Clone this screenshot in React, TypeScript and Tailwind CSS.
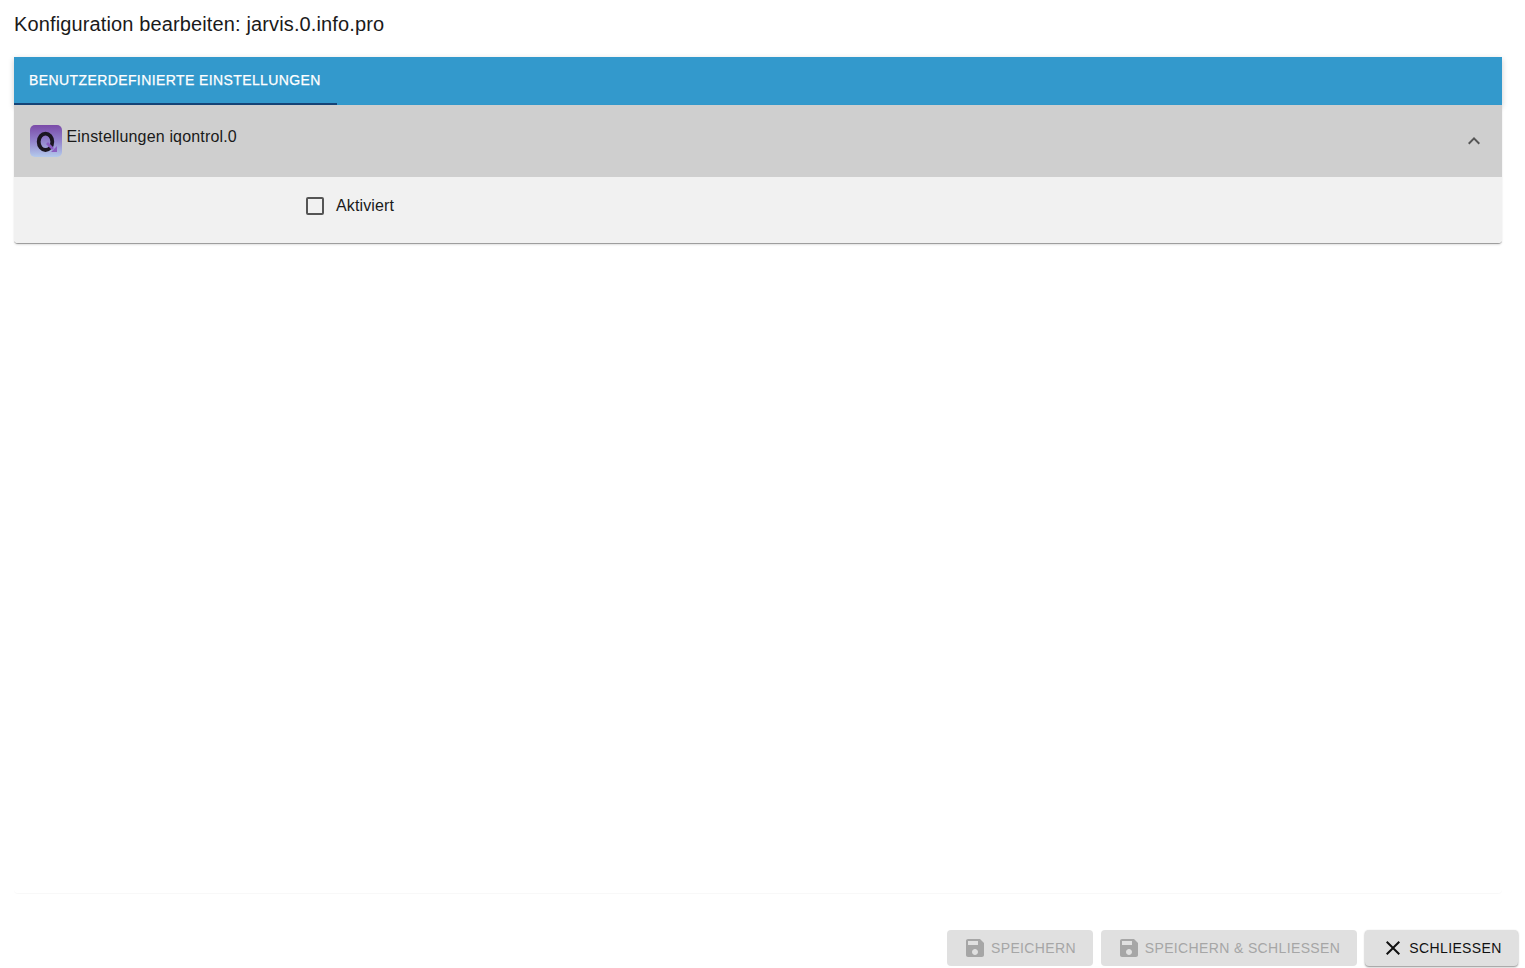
import React from "react";

function SaveIcon() {
  return (
    <svg viewBox="0 0 24 24" className="w-[24px] h-[24px] shrink-0" fill="currentColor">
      <path d="M17 3H5c-1.11 0-2 .9-2 2v14c0 1.1.89 2 2 2h14c1.1 0 2-.9 2-2V7l-4-4zm-5 16c-1.66 0-3-1.34-3-3s1.34-3 3-3 3 1.34 3 3-1.34 3-3 3zm3-10H5V5h10v4z" />
    </svg>
  );
}

function DisabledButton({ label, width }: { label: string; width: string }) {
  return (
    <div className={`${width} h-[36px] rounded bg-[#e0e0e0] text-[#a6a6a6] flex items-center justify-center gap-[4px] pr-[1px] text-[14px] tracking-[0.36px]`}>
      <SaveIcon />
      <span>{label}</span>
    </div>
  );
}

function LogoIcon() {
  return (
    <svg viewBox="0 0 32 32" className="w-[32px] h-[32px] shrink-0">
      <defs>
        <linearGradient id="lg" x1="0" y1="0" x2="0" y2="1">
          <stop offset="0" stopColor="#7a4aa8" />
          <stop offset="0.45" stopColor="#8f7cc8" />
          <stop offset="1" stopColor="#b4caec" />
        </linearGradient>
      </defs>
      <rect width="32" height="32" rx="5" fill="url(#lg)" />
      <ellipse cx="15.5" cy="16.8" rx="6.8" ry="8.2" fill="none" stroke="#1b1620" strokeWidth="3.8" />
      <path d="M17 18l6 6" stroke="#8a5cc0" strokeWidth="2.8" fill="none" />
      <path d="M21 27h6v-6z" fill="#8a5cc0" />
    </svg>
  );
}

export default function App() {
  return (
    <div className="h-[968px] w-[1525px] bg-white flex flex-col font-['Liberation_Sans',Arial,sans-serif] text-[#1a1a1a] overflow-hidden">
      <div className="h-[57px] pl-[14px] pt-[11px] text-[20px] leading-[26px] tracking-[0.13px] shrink-0">
        Konfiguration bearbeiten: jarvis.0.info.pro
      </div>
      <div className="mx-[14px] w-[1488px] h-[836px] shrink-0 rounded-[4px] shadow-[0_1px_1px_rgba(0,0,0,0.03)]">
        <div className="h-[48px] bg-[#3399cc] flex shadow-[0_2px_6px_rgba(0,0,0,0.2)]">
          <div className="w-[323px] h-[48px] border-b-2 border-[#164477] pl-[15px] pt-[14px] text-[14px] leading-[18px] text-white tracking-[0.4px] [-webkit-text-stroke:0.25px_white]">
            BENUTZERDEFINIERTE EINSTELLUNGEN
          </div>
        </div>
        <div className="relative rounded-b-[4px] border-b border-[#9e9e9e] shadow-[0_1px_2px_rgba(0,0,0,0.12)]">
          <div className="h-[72px] bg-[#cfcfcf] flex items-start pl-[16px] pr-[16px] pt-[20px]">
            <LogoIcon />
            <span className="ml-[4.5px] text-[16px] leading-[24px] tracking-[0.17px]">Einstellungen iqontrol.0</span>
            <svg viewBox="0 0 24 24" className="ml-auto mt-[4px] w-[24px] h-[24px]" fill="#555555">
              <path d="M12 8l-6 6 1.41 1.41L12 10.83l4.59 4.58L18 14z" />
            </svg>
          </div>
          <div className="h-[66px] bg-[#f1f1f1] rounded-b-[4px] flex items-start pl-[292px] pt-[20px]">
            <span className="w-[18px] h-[18px] rounded-[2px] border-2 border-[#555555]" />
            <span className="ml-[12px] -mt-[3px] text-[16px] leading-[24px] tracking-[0.12px]">Aktiviert</span>
          </div>
        </div>
      </div>
      <div className="flex justify-end gap-[8px] pt-[37px] pr-[7px]">
        <DisabledButton label="SPEICHERN" width="w-[146px]" />
        <DisabledButton label="SPEICHERN & SCHLIESSEN" width="w-[256px]" />
        <div className="w-[153px] h-[36px] rounded bg-[#e0e0e0] shadow-[0_1px_2px_rgba(0,0,0,0.45)] flex items-center justify-center gap-[4px] text-[14px] tracking-[0.36px] text-[#111]">
          <svg viewBox="0 0 24 24" className="w-[24px] h-[24px]" fill="currentColor">
            <path d="M19 6.41 17.59 5 12 10.59 6.41 5 5 6.41 10.59 12 5 17.59 6.41 19 12 13.41 17.59 19 19 17.59 13.41 12z" />
          </svg>
          <span>SCHLIESSEN</span>
        </div>
      </div>
    </div>
  );
}
